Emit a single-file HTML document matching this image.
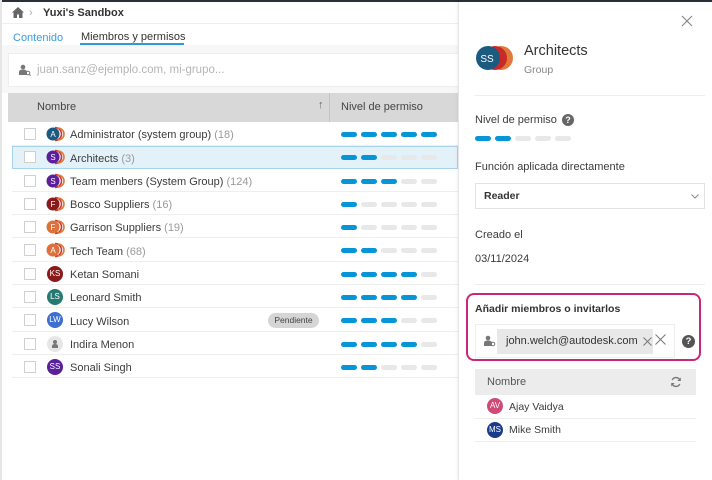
<!DOCTYPE html>
<html><head><meta charset="utf-8"><style>
*{box-sizing:border-box;margin:0;padding:0}
body{width:712px;height:480px;overflow:hidden;position:relative;background:#fff;font-family:"Liberation Sans",sans-serif;color:#3c3c3c;font-size:11px}
.a{position:absolute}
.t{position:absolute;white-space:nowrap;margin-top:2px}
.bars{position:absolute;display:flex;gap:4px}
.bars i{display:block;width:16px;height:5px;border-radius:3px;background:#e8e8e8}
.bars i.b{background:#0696d7}
.cb{position:absolute;left:24px;width:12px;height:12px;border:1px solid #d0d0d0;background:#fff}
.row{position:absolute;left:12px;width:446px;height:23px;border-bottom:1px solid #eee}
.av{position:absolute;width:16px;height:16px;border-radius:50%;color:#fff;font-size:8px;text-align:center;line-height:16px}
.cnt{color:#9a9a9a}
</style></head><body>
<div class="a" style="left:0;top:0;width:712px;height:2px;background:#2a2f3a"></div>
<div class="a" style="left:0;top:0;width:2px;height:480px;background:#e6e6e6"></div>
<svg class="a" style="left:12px;top:7px" width="12" height="11" viewBox="0 0 12 11"><path d="M6 0L0 5.5h1.5V11h3.5V7.5h2V11h3.5V5.5H12z" fill="#666"/></svg>
<div class="t" style="left:29px;top:5px;color:#aaa;font-size:11px">›</div>
<div class="t" style="left:43px;top:5px;font-weight:bold;font-size:11px;color:#333">Yuxi's Sandbox</div>
<div class="a" style="left:2px;top:23px;width:456px;height:1px;background:#eee"></div>
<div class="t" style="left:13px;top:30px;color:#3b9be0;font-size:11px">Contenido</div>
<div class="t" style="left:81px;top:29px;color:#333;font-size:11px">Miembros y permisos</div>
<div class="a" style="left:80px;top:43px;width:104px;height:2px;background:#2b9ad8"></div>
<div class="a" style="left:2px;top:45px;width:456px;height:48px;background:#f7f7f7"></div>
<div class="a" style="left:8px;top:53px;width:450px;height:34px;background:#fff;border:1px solid #eee;border-right:none"></div>
<svg class="a" style="left:19px;top:64px" width="12" height="12" viewBox="0 0 12 12"><circle cx="4" cy="3" r="2.3" fill="#777"/><path d="M0 11V8c0-1.5 1.5-2.5 4-2.5S8 6.5 8 8v3z" fill="#777"/><circle cx="9" cy="9" r="1.8" fill="none" stroke="#777" stroke-width="1"/><path d="M10.3 10.3L11.6 11.6" stroke="#777"/></svg>
<div class="t" style="left:37px;top:62px;color:#b5b5b5;font-size:11.5px">juan.sanz@ejemplo.com, mi-grupo...</div>
<div class="a" style="left:8px;top:93px;width:450px;height:29px;background:#d8d8d8"></div>
<div class="a" style="left:329px;top:93px;width:1px;height:29px;background:#c4c4c4"></div>
<div class="t" style="left:37px;top:99px;font-size:11px;color:#444">Nombre</div>
<div class="t" style="left:318px;top:97px;font-size:11px;color:#666">↑</div>
<div class="t" style="left:341px;top:99px;font-size:11px;color:#444">Nivel de permiso</div>

<div class="row" style="top:123px"></div>
<div class="row" style="top:146px;background:#e3f1f9;border:1px solid #a9d3ed"></div>
<div class="row" style="top:169px"></div>
<div class="row" style="top:192px"></div>
<div class="row" style="top:215px"></div>
<div class="row" style="top:239px"></div>
<div class="row" style="top:262px"></div>
<div class="row" style="top:285px"></div>
<div class="row" style="top:309px"></div>
<div class="row" style="top:332px"></div>
<div class="row" style="top:355px"></div>

<svg width="0" height="0" style="position:absolute"><defs>
<g id="arcs"><path d="M9 1.5a6.5 6.5 0 0 1 0 13" fill="none" stroke="#d03838" stroke-width="1.6"/><path d="M12 2a6 6 0 0 1 0 12" fill="none" stroke="#e07a3a" stroke-width="1.6"/></g>
</defs></svg>

<svg class="a" style="left:46px;top:126px" width="20" height="16"><use href="#arcs"/><circle cx="7" cy="8" r="6.5" fill="#1d5a80"/><text x="7" y="11" font-size="8" fill="#fff" text-anchor="middle" font-family="Liberation Sans">A</text></svg>
<svg class="a" style="left:46px;top:149px" width="20" height="16"><use href="#arcs"/><circle cx="7" cy="8" r="6.5" fill="#5a1f9a"/><text x="7" y="11" font-size="8" fill="#fff" text-anchor="middle" font-family="Liberation Sans">S</text></svg>
<svg class="a" style="left:46px;top:173px" width="20" height="16"><use href="#arcs"/><circle cx="7" cy="8" r="6.5" fill="#5a1f9a"/><text x="7" y="11" font-size="8" fill="#fff" text-anchor="middle" font-family="Liberation Sans">S</text></svg>
<svg class="a" style="left:46px;top:196px" width="20" height="16"><use href="#arcs"/><circle cx="7" cy="8" r="6.5" fill="#8a1a1a"/><text x="7" y="11" font-size="8" fill="#fff" text-anchor="middle" font-family="Liberation Sans">F</text></svg>
<svg class="a" style="left:46px;top:219px" width="20" height="16"><use href="#arcs"/><circle cx="7" cy="8" r="6.5" fill="#e0703a"/><text x="7" y="11" font-size="8" fill="#fff" text-anchor="middle" font-family="Liberation Sans">F</text></svg>
<svg class="a" style="left:46px;top:242px" width="20" height="16"><use href="#arcs"/><circle cx="7" cy="8" r="6.5" fill="#e0703a"/><text x="7" y="11" font-size="8" fill="#fff" text-anchor="middle" font-family="Liberation Sans">A</text></svg>
<div class="av" style="left:47px;top:266px;background:#8a1a1a">KS</div>
<div class="av" style="left:47px;top:289px;background:#267a72">LS</div>
<div class="av" style="left:47px;top:312px;background:#3d6fd0">LW</div>
<div class="av" style="left:47px;top:336px;background:#e6e6e6"><svg width="16" height="16"><circle cx="8" cy="6" r="2" fill="#777"/><path d="M5 12v-2c0-1 1-2 3-2s3 1 3 2v2z" fill="#777"/></svg></div>
<div class="av" style="left:47px;top:359px;background:#5a1f9a">SS</div>

<div class="cb" style="top:128px"></div><div class="cb" style="top:151px"></div><div class="cb" style="top:175px"></div><div class="cb" style="top:198px"></div><div class="cb" style="top:221px"></div><div class="cb" style="top:244px"></div><div class="cb" style="top:268px"></div><div class="cb" style="top:291px"></div><div class="cb" style="top:314px"></div><div class="cb" style="top:338px"></div><div class="cb" style="top:361px"></div>

<div class="t" style="left:70px;top:127px">Administrator (system group) <span class="cnt">(18)</span></div>
<div class="t" style="left:70px;top:151px">Architects <span class="cnt">(3)</span></div>
<div class="t" style="left:70px;top:174px">Team menbers (System Group) <span class="cnt">(124)</span></div>
<div class="t" style="left:70px;top:197px">Bosco Suppliers <span class="cnt">(16)</span></div>
<div class="t" style="left:70px;top:220px">Garrison Suppliers <span class="cnt">(19)</span></div>
<div class="t" style="left:70px;top:244px">Tech Team <span class="cnt">(68)</span></div>
<div class="t" style="left:70px;top:267px">Ketan Somani</div>
<div class="t" style="left:70px;top:290px">Leonard Smith</div>
<div class="t" style="left:70px;top:314px">Lucy Wilson</div>
<div class="t" style="left:70px;top:337px">Indira Menon</div>
<div class="t" style="left:70px;top:360px">Sonali Singh</div>
<div class="a" style="left:268px;top:313px;width:51px;height:15px;border-radius:8px;background:#d5d5d5;font-size:8.5px;text-align:center;line-height:15px;color:#444">Pendiente</div>

<div class="bars" style="left:341px;top:132px"><i class="b"></i><i class="b"></i><i class="b"></i><i class="b"></i><i class="b"></i></div>
<div class="bars" style="left:341px;top:155px"><i class="b"></i><i class="b"></i><i></i><i></i><i></i></div>
<div class="bars" style="left:341px;top:179px"><i class="b"></i><i class="b"></i><i class="b"></i><i></i><i></i></div>
<div class="bars" style="left:341px;top:202px"><i class="b"></i><i></i><i></i><i></i><i></i></div>
<div class="bars" style="left:341px;top:225px"><i class="b"></i><i></i><i></i><i></i><i></i></div>
<div class="bars" style="left:341px;top:248px"><i class="b"></i><i class="b"></i><i></i><i></i><i></i></div>
<div class="bars" style="left:341px;top:272px"><i class="b"></i><i class="b"></i><i class="b"></i><i class="b"></i><i></i></div>
<div class="bars" style="left:341px;top:295px"><i class="b"></i><i class="b"></i><i class="b"></i><i class="b"></i><i></i></div>
<div class="bars" style="left:341px;top:318px"><i class="b"></i><i class="b"></i><i class="b"></i><i></i><i></i></div>
<div class="bars" style="left:341px;top:342px"><i class="b"></i><i class="b"></i><i class="b"></i><i class="b"></i><i></i></div>
<div class="bars" style="left:341px;top:365px"><i class="b"></i><i class="b"></i><i></i><i></i><i></i></div>

<div class="a" style="left:458px;top:2px;width:254px;height:478px;background:#fff;border-left:1px solid #e6e6e6;box-shadow:-1px 0 3px rgba(0,0,0,.06)"></div>
<svg class="a" style="left:681px;top:15px" width="12" height="12"><path d="M1 1L11 11M11 1L1 11" stroke="#888" stroke-width="1.2"/></svg>
<svg class="a" style="left:475px;top:45px" width="42" height="26"><circle cx="26" cy="13" r="12" fill="#e07a3a"/><circle cx="20" cy="13" r="12" fill="#c82a2a"/><circle cx="13" cy="13" r="12" fill="#1d5a80"/><text x="12" y="17" font-size="10" fill="#fff" text-anchor="middle" font-family="Liberation Sans">SS</text></svg>
<div class="t" style="left:524px;top:41px;font-size:14.5px;color:#333">Architects</div>
<div class="t" style="left:524px;top:62px;font-size:10.5px;color:#888">Group</div>
<div class="a" style="left:475px;top:95px;width:230px;height:1px;background:#eee"></div>
<div class="t" style="left:475px;top:112px;font-size:11px">Nivel de permiso</div>
<div class="a" style="left:562px;top:114px;width:12px;height:12px;border-radius:50%;background:#666;color:#fff;font-size:9px;font-weight:bold;text-align:center;line-height:12px">?</div>
<div class="bars" style="left:475px;top:136px"><i class="b"></i><i class="b"></i><i></i><i></i><i></i></div>
<div class="t" style="left:475px;top:159px;font-size:11px">Función aplicada directamente</div>
<div class="a" style="left:475px;top:183px;width:230px;height:26px;border:1px solid #e3e3e3"></div>
<div class="t" style="left:484px;top:188px;font-size:10.5px;font-weight:bold;color:#333">Reader</div>
<svg class="a" style="left:691px;top:194px" width="8" height="5"><path d="M0.5 0.5L4 4L7.5 0.5" stroke="#888" fill="none"/></svg>
<div class="t" style="left:475px;top:227px;font-size:11px">Creado el</div>
<div class="t" style="left:475px;top:251px;font-size:11px">03/11/2024</div>
<div class="a" style="left:475px;top:284px;width:230px;height:1px;background:#eee"></div>
<div class="a" style="left:466px;top:293px;width:235px;height:68px;border:2.5px solid #c8287a;border-radius:8px;background:#fff"></div>
<div class="t" style="left:475px;top:301px;font-size:10.5px;font-weight:bold;color:#333">Añadir miembros o invitarlos</div>
<div class="a" style="left:475px;top:324px;width:200px;height:34px;border:1px solid #eee;background:#fff"></div>
<svg class="a" style="left:484px;top:335px" width="12" height="12" viewBox="0 0 12 12"><circle cx="4" cy="3" r="2.3" fill="#777"/><path d="M0 11V8c0-1.5 1.5-2.5 4-2.5S8 6.5 8 8v3z" fill="#777"/><circle cx="9" cy="9" r="1.8" fill="none" stroke="#777"/></svg>
<div class="a" style="left:497px;top:329px;width:156px;height:25px;background:#e8e8e8"></div>
<div class="t" style="left:506px;top:333px;font-size:11px;color:#333">john.welch@autodesk.com</div>
<svg class="a" style="left:643px;top:337px" width="9" height="9"><path d="M0.5 0.5L8.5 8.5M8.5 0.5L0.5 8.5" stroke="#777"/></svg>
<svg class="a" style="left:655px;top:334px" width="11" height="11"><path d="M0.5 0.5L10.5 10.5M10.5 0.5L0.5 10.5" stroke="#777"/></svg>
<div class="a" style="left:682px;top:335px;width:13px;height:13px;border-radius:50%;background:#555;color:#fff;font-size:9.5px;font-weight:bold;text-align:center;line-height:13px">?</div>
<div class="a" style="left:475px;top:369px;width:221px;height:26px;background:#ececec"></div>
<div class="t" style="left:487px;top:374px;font-size:11px;color:#555">Nombre</div>
<svg class="a" style="left:670px;top:376px" width="12" height="12" viewBox="0 0 12 12"><path d="M10 4.5A4.2 4.2 0 0 0 2.2 4M2 7.5A4.2 4.2 0 0 0 9.8 8" fill="none" stroke="#777" stroke-width="1.4"/><path d="M10.8 1.5v3.5H7.3z M1.2 10.5V7h3.5z" fill="#777"/></svg>
<div class="av" style="left:487px;top:398px;background:#d04a78">AV</div>
<div class="t" style="left:509px;top:399px;font-size:10.5px">Ajay Vaidya</div>
<div class="a" style="left:475px;top:418px;width:221px;height:1px;background:#eee"></div>
<div class="av" style="left:487px;top:422px;background:#1a3a8a">MS</div>
<div class="t" style="left:509px;top:422px;font-size:10.5px">Mike Smith</div>
<div class="a" style="left:475px;top:441px;width:221px;height:1px;background:#eee"></div>
</body></html>
